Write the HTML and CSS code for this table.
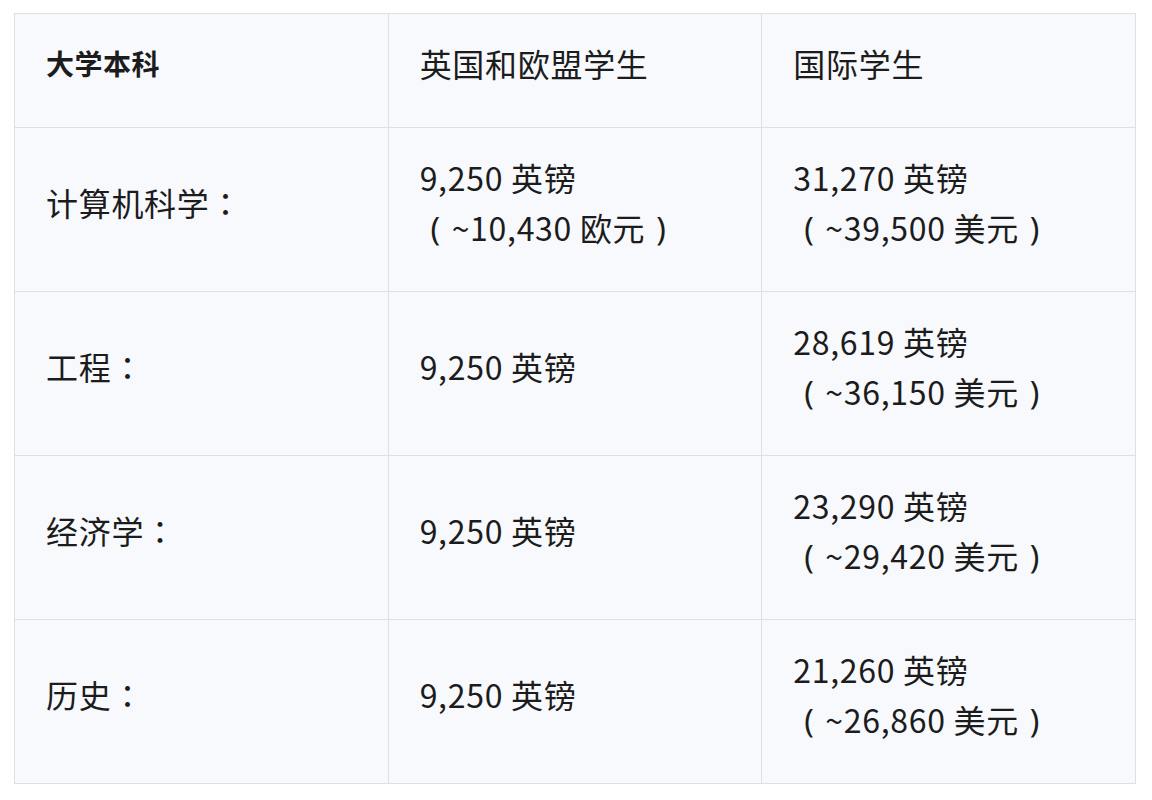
FILE: index.html
```html
<!DOCTYPE html>
<html lang="zh">
<head>
<meta charset="utf-8">
<link rel="stylesheet" href="styles.css">
</head>
<body>
<table class="fees">
  <tr class="head">
    <th class="first">大学本科</th>
    <th>英国和欧盟学生</th>
    <th>国际学生</th>
  </tr>
  <tr>
    <td>计算机科学<span class="colon">：</span></td>
    <td>9,250 英镑<br><span class="par">(</span>~10,430 欧元<span class="par">)</span></td>
    <td>31,270 英镑<br><span class="par">(</span>~39,500 美元<span class="par">)</span></td>
  </tr>
  <tr>
    <td>工程<span class="colon">：</span></td>
    <td>9,250 英镑</td>
    <td>28,619 英镑<br><span class="par">(</span>~36,150 美元<span class="par">)</span></td>
  </tr>
  <tr>
    <td>经济学<span class="colon">：</span></td>
    <td>9,250 英镑</td>
    <td>23,290 英镑<br><span class="par">(</span>~29,420 美元<span class="par">)</span></td>
  </tr>
  <tr>
    <td>历史<span class="colon">：</span></td>
    <td>9,250 英镑</td>
    <td>21,260 英镑<br><span class="par">(</span>~26,860 美元<span class="par">)</span></td>
  </tr>
</table>
</body>
</html>
```
FILE: styles.css
```css
html, body {
  margin: 0;
  background: #ffffff;
}
body {
  padding: 13px 0 0 14px;
  font-family: "Noto Sans CJK SC", "Noto Sans", sans-serif;
  color: #1c1c1c;
}
.fees {
  width: 1122px;
  border-collapse: collapse;
  table-layout: fixed;
  border: 1px solid #dcdde1;
}
.fees th,
.fees td {
  border: 1px solid #dfe0e4;
  background: #f8f9fc;
  padding: 24px 30px 39px 31px;
  font-size: 32px;
  letter-spacing: 0.7px;
  line-height: 50px;
  text-align: left;
  vertical-align: middle;
  font-weight: 400;
}
.fees th.first {
  font-size: 28px;
  font-weight: 700;
  letter-spacing: 0.5px;
}
.colon {
  display: inline-block;
  width: 32px;
  line-height: 30px;
  text-align: center;
  font-family: "Noto Sans CJK TC", "Noto Sans CJK SC", sans-serif;
}
.par {
  display: inline-block;
  width: 32px;
  line-height: 30px;
  text-align: center;
  font-family: "Noto Sans", sans-serif;
}
```
